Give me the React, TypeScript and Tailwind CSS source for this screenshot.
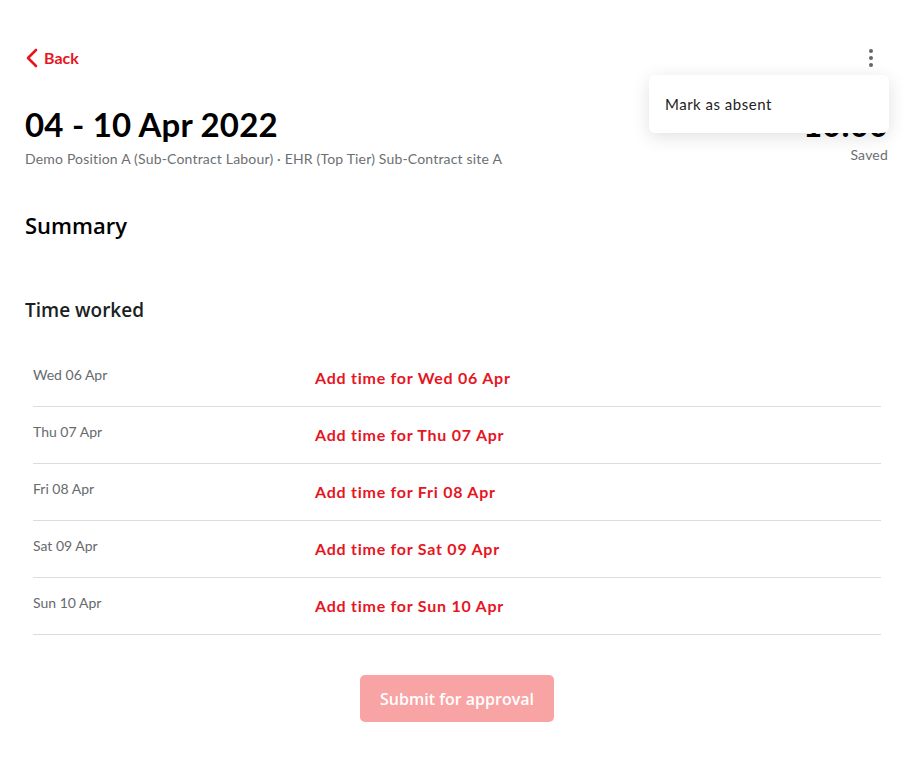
import React from 'react';

const days = ['Wed 06 Apr', 'Thu 07 Apr', 'Fri 08 Apr', 'Sat 09 Apr', 'Sun 10 Apr'];

const App: React.FC = () => {
    return (
        <div className="relative min-h-[758px] w-[924px] bg-white font-['Lato',sans-serif] text-black">
            <div className="px-[25px] pt-[46px]">
                {/* top bar */}
                <div className="flex h-6 items-center justify-between pr-[26px]">
                    <button className="flex items-center gap-[6px] text-[16px] font-bold text-[#e5161f]">
                        <svg width="13" height="20" viewBox="0 0 13 20" fill="none">
                            <path d="M11 2 L3 10 L11 18" stroke="#e5161f" strokeWidth="2.6" strokeLinecap="round" strokeLinejoin="round" />
                        </svg>
                        Back
                    </button>
                    <div className="flex flex-col items-center gap-[3px]">
                        <span className="block h-[4px] w-[4px] rounded-full bg-[#666]" />
                        <span className="block h-[4px] w-[4px] rounded-full bg-[#666]" />
                        <span className="block h-[4px] w-[4px] rounded-full bg-[#666]" />
                    </div>
                </div>

                {/* heading */}
                <div className="mt-[34px] flex items-start justify-between pr-[11px]">
                    <div>
                        <h1 className="text-[33px] leading-[40px] font-bold tracking-[0.2px]">04 - 10 Apr 2022</h1>
                        <p className="mt-[5px] text-[14px] leading-5 tracking-[0.18px] text-[#6b6f73]">
                            Demo Position A (Sub-Contract Labour) · EHR (Top Tier) Sub-Contract site A
                        </p>
                    </div>
                    <div className="flex flex-col items-end">
                        <span className="text-[33px] leading-[40px] font-bold">10:00</span>
                        <span className="mt-[3px] text-[14px] leading-4 tracking-[0.2px] text-[#6b6f73]">Saved</span>
                    </div>
                </div>

                <h2 className="mt-[41px] font-['Open_Sans',sans-serif] text-[22px] leading-[30px] font-semibold">Summary</h2>
                <h3 className="mt-[57px] font-['Open_Sans',sans-serif] text-[19px] leading-[26px] font-semibold text-[#1b1f23]">Time worked</h3>

                {/* days */}
                <div className="mt-[27px] ml-[8px] mr-[18px]">
                    {days.map(d => (
                        <div key={d} className="flex h-[57px] border-b border-[#dcdcdc]">
                            <div className="w-[282px] pt-[15px] text-[14px] leading-5 text-[#666a6e]">{d}</div>
                            <button className="h-fit pt-[16px] text-left text-[16px] leading-6 font-bold tracking-[0.75px] text-[#e5161f]">
                                Add time for {d}
                            </button>
                        </div>
                    ))}
                </div>

                <div className="mt-[40px] flex justify-center pr-[10px]">
                    <button className="h-[47px] w-[194px] rounded-[5px] bg-[#f9a4a4] font-['Open_Sans',sans-serif] text-[16px] font-semibold text-white">
                        Submit for approval
                    </button>
                </div>
            </div>

            {/* menu */}
            <div className="absolute left-[649px] top-[75px] w-[240px] rounded-[6px] bg-white px-[16px] py-[17px] shadow-[0_4px_18px_rgba(0,0,0,0.12)]">
                <span className="text-[15px] leading-5 tracking-[0.5px] text-[#222]">Mark as absent</span>
            </div>
        </div>
    );
};

export default App;
